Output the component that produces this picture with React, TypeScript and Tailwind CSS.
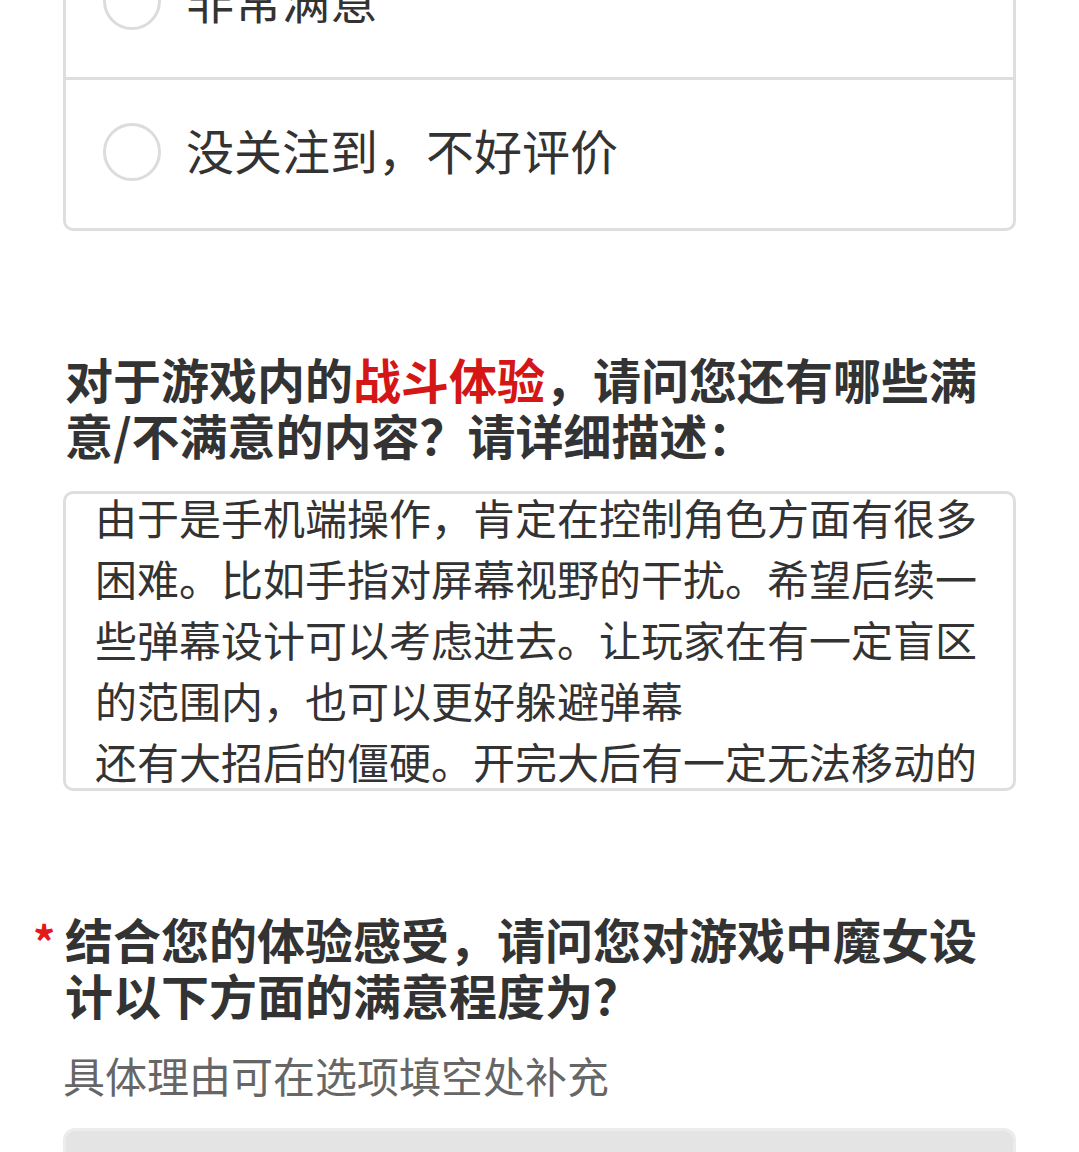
import React from 'react';

const options = ['非常满意', '没关注到，不好评价'];

const answer =
  '由于是手机端操作，肯定在控制角色方面有很多困难。比如手指对屏幕视野的干扰。希望后续一些弹幕设计可以考虑进去。让玩家在有一定盲区的范围内，也可以更好躲避弹幕\n还有大招后的僵硬。开完大后有一定无法移动的时间，很容易被弹幕击中，希望可以优化一下。';

const Radio = ({ label }: { label: string }) => (
  <div className="flex h-[148px] items-center pl-[37px]">
    <div className="mb-[5px] h-[58px] w-[58px] shrink-0 rounded-full border-[3px] border-[#dcdcdc] bg-white" />
    <span className="mb-[10px] ml-[25px] text-[48px] leading-[56px] text-[#333]">{label}</span>
  </div>
);

export default function App() {
  return (
    <div className="min-h-screen overflow-hidden bg-white font-['Noto_Sans_CJK_SC','Noto_Sans',sans-serif] text-[#333]">
      <div className="-mt-[74px] px-[63px] pb-10">
        {/* previous question, options list (scrolled) */}
        <div className="overflow-hidden rounded-[10px] border-[3px] border-[#dedede]">
          {options.map((o, i) => (
            <div key={o} className={i < options.length - 1 ? 'border-b-[3px] border-[#dedede]' : ''}>
              <Radio label={o} />
            </div>
          ))}
        </div>

        {/* open question */}
        <h2 className="mt-[119px] pl-[2px] text-[48px] font-bold leading-[56px] text-[#333]">
          对于游戏内的<span className="text-[#d41616]">战斗体验</span>，请问您还有哪些满意/不满意的内容？请详细描述：
        </h2>
        <div className="mt-[29px] h-[300px] overflow-hidden rounded-[10px] border-[3px] border-[#dedede]">
          <p className="-mt-[8px] whitespace-pre-wrap pl-[29px] pr-[31px] text-[42px] leading-[61px] text-[#333]">
            {answer}
          </p>
        </div>

        {/* next question */}
        <div className="mt-[119px] -ml-[30px] flex">
          <span className="w-[30px] shrink-0 pt-[2px] text-[44px] font-bold leading-[56px] text-[#e31a1a]">*</span>
          <h2 className="pl-[2px] text-[48px] font-bold leading-[56px] text-[#333]">
            结合您的体验感受，请问您对游戏中魔女设计以下方面的满意程度为？
          </h2>
        </div>
        <p className="mt-[28px] text-[42px] leading-[50px] text-[#666]">具体理由可在选项填空处补充</p>
        <div className="mt-[28px] h-[120px] rounded-[12px] border-[3px] border-[#ececec] bg-[#e4e4e4]" />
      </div>
    </div>
  );
}
